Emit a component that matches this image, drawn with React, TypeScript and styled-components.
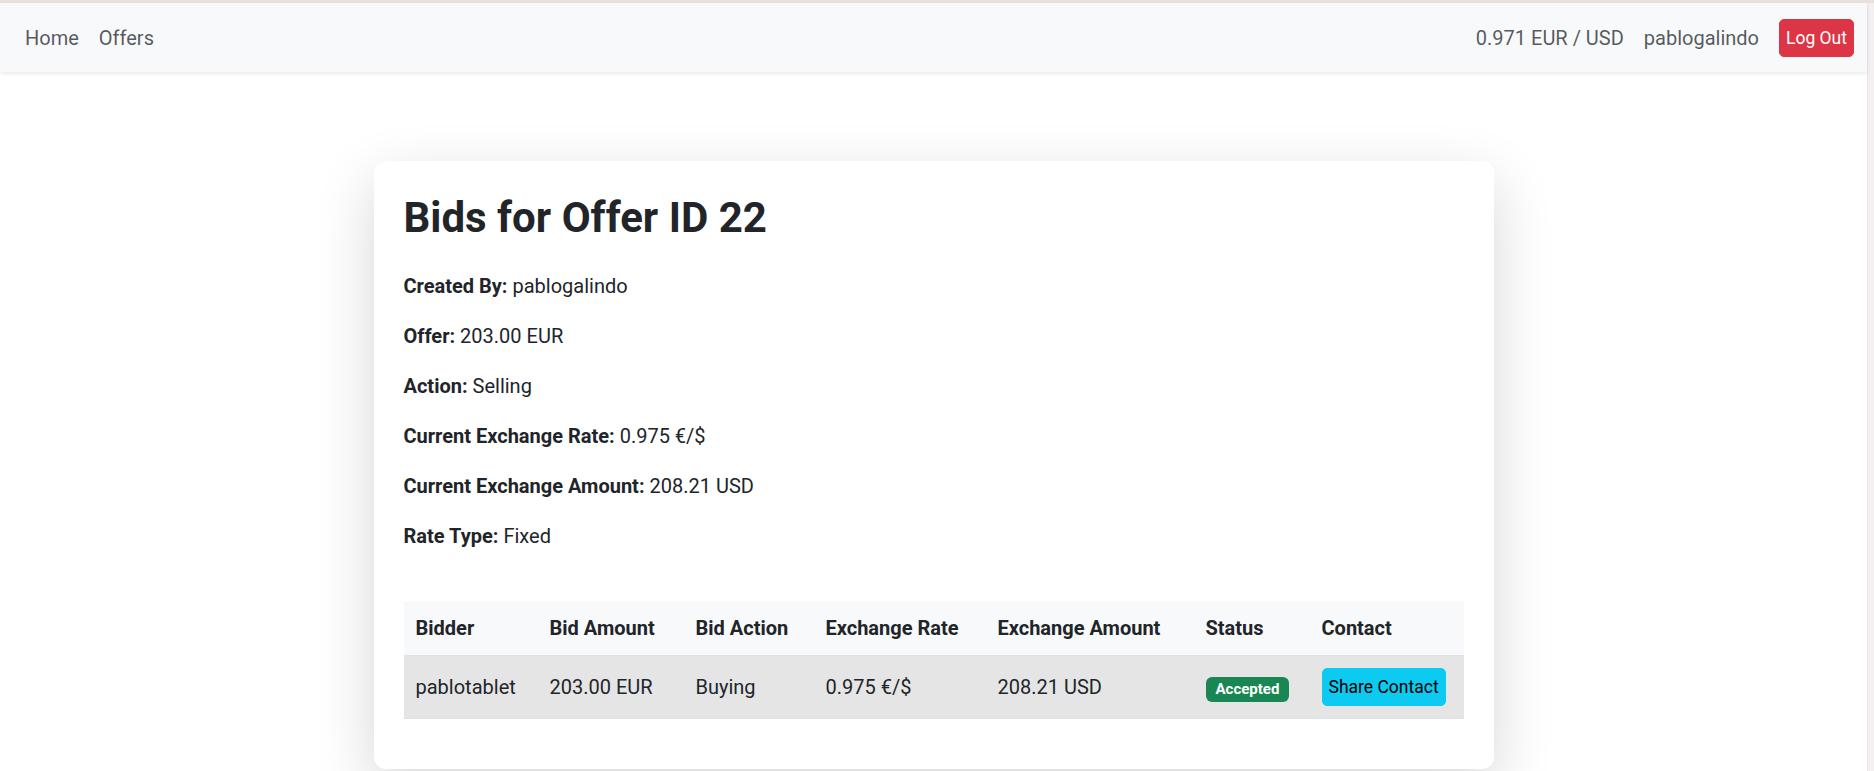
import React from "react";
import styled, { createGlobalStyle } from "styled-components";

const GlobalStyle = createGlobalStyle`
  html, body {
    margin: 0;
    padding: 0;
    background: #ffffff;
    font-family: Roboto, "Liberation Sans", Arial, sans-serif;
    color: #212529;
    overflow: hidden;
  }
  * { box-sizing: border-box; }
`;

const Shell = styled.div`
  display: flex;
  flex-direction: column;
  width: 1874px;
  height: 771px;
  overflow: hidden;
`;

const TopBand = styled.div`
  height: 3px;
  background: #e6e1dc;
  flex: none;
`;

const Body = styled.div`
  display: flex;
  flex: 1;
  min-height: 0;
`;

const Main = styled.div`
  flex: 1;
  min-width: 0;
  display: flex;
  flex-direction: column;
`;

const ScrollStrip = styled.div`
  width: 7px;
  flex: none;
  background: #f4eff0;
  border-left: 1px solid #ece6e7;
`;

const Navbar = styled.nav`
  height: 69px;
  flex: none;
  display: flex;
  align-items: center;
  justify-content: space-between;
  padding: 0 13px 0 15px;
  background: #f8f9fa;
  box-shadow: 0 2px 4px rgba(0, 0, 0, 0.08);
  position: relative;
  z-index: 1;
`;

const NavGroup = styled.div`
  display: flex;
  align-items: center;
`;

const NavLink = styled.a`
  display: block;
  padding: 10px;
  font-size: 20px;
  line-height: 30px;
  color: rgba(33, 37, 41, 0.75);
  text-decoration: none;
`;

const Button = styled.button<{ $variant: "danger" | "info" }>`
  font-family: inherit;
  font-size: 17.5px;
  line-height: 26px;
  padding: 5px 6px;
  border-radius: 5px;
  cursor: pointer;
  border: 1px solid ${(p) => (p.$variant === "danger" ? "#dc3545" : "#0dcaf0")};
  background: ${(p) => (p.$variant === "danger" ? "#dc3545" : "#0dcaf0")};
  color: ${(p) => (p.$variant === "danger" ? "#ffffff" : "#000000")};
  white-space: nowrap;
`;

const LogoutButton = styled(Button)`
  margin-left: 10px;
`;

const Content = styled.main`
  flex: 1;
  padding-top: 89px;
  display: flex;
  justify-content: center;
  align-items: flex-start;
`;

const Card = styled.section`
  width: 1120px;
  background: #ffffff;
  border-radius: 12px;
  padding: 30px;
  box-shadow: 0 20px 60px rgba(0, 0, 0, 0.16);
`;

const Title = styled.h2`
  margin: 2px 0 28px;
  font-size: 42px;
  line-height: 50px;
  font-weight: 700;
  color: #212529;
`;

const Detail = styled.p`
  margin: 0 0 20px;
  font-size: 20px;
  line-height: 30px;
`;

const Label = styled.strong`
  font-weight: 700;
`;

const Table = styled.table`
  margin: 50px 0 20px;
  width: 100%;
  border-collapse: collapse;
  table-layout: fixed;
  font-size: 20px;
  line-height: 30px;
`;

const HeadCell = styled.th`
  text-align: left;
  font-weight: 700;
  padding: 12px;
  background: #f8f9fa;
  border-bottom: 1px solid #dee2e6;
  vertical-align: middle;
`;

const Cell = styled.td`
  padding: 12px;
  background: #e5e5e6;
  border-bottom: 1px solid #dee2e6;
  vertical-align: middle;
  white-space: nowrap;
`;

const Badge = styled.span`
  display: inline-block;
  font-size: 15px;
  line-height: 15px;
  font-weight: 700;
  padding: 5px 10px;
  border-radius: 6px;
  background: #198754;
  color: #ffffff;
`;

const columns = [
  { name: "Bidder", width: 134 },
  { name: "Bid Amount", width: 146 },
  { name: "Bid Action", width: 130 },
  { name: "Exchange Rate", width: 172 },
  { name: "Exchange Amount", width: 208 },
  { name: "Status", width: 116 },
  { name: "Contact", width: 154 },
];

const details: [string, string][] = [
  ["Created By:", "pablogalindo"],
  ["Offer:", "203.00 EUR"],
  ["Action:", "Selling"],
  ["Current Exchange Rate:", "0.975 €/$"],
  ["Current Exchange Amount:", "208.21 USD"],
  ["Rate Type:", "Fixed"],
];

export default function App() {
  return (
    <>
      <GlobalStyle />
      <Shell>
        <TopBand />
        <Body>
          <Main>
            <Navbar>
              <NavGroup>
                <NavLink href="#">Home</NavLink>
                <NavLink href="#">Offers</NavLink>
              </NavGroup>
              <NavGroup>
                <NavLink>0.971 EUR / USD</NavLink>
                <NavLink>pablogalindo</NavLink>
                <LogoutButton $variant="danger">Log Out</LogoutButton>
              </NavGroup>
            </Navbar>
            <Content>
              <Card>
                <Title>Bids for Offer ID 22</Title>
                {details.map(([k, v]) => (
                  <Detail key={k}>
                    <Label>{k}</Label> {v}
                  </Detail>
                ))}
                <Table>
                  <colgroup>
                    {columns.map((c) => (
                      <col key={c.name} width={c.width} />
                    ))}
                  </colgroup>
                  <thead>
                    <tr>
                      {columns.map((c) => (
                        <HeadCell key={c.name}>{c.name}</HeadCell>
                      ))}
                    </tr>
                  </thead>
                  <tbody>
                    <tr>
                      <Cell>pablotablet</Cell>
                      <Cell>203.00 EUR</Cell>
                      <Cell>Buying</Cell>
                      <Cell>0.975 €/$</Cell>
                      <Cell>208.21 USD</Cell>
                      <Cell>
                        <Badge>Accepted</Badge>
                      </Cell>
                      <Cell>
                        <Button $variant="info">Share Contact</Button>
                      </Cell>
                    </tr>
                  </tbody>
                </Table>
              </Card>
            </Content>
          </Main>
          <ScrollStrip />
        </Body>
      </Shell>
    </>
  );
}
